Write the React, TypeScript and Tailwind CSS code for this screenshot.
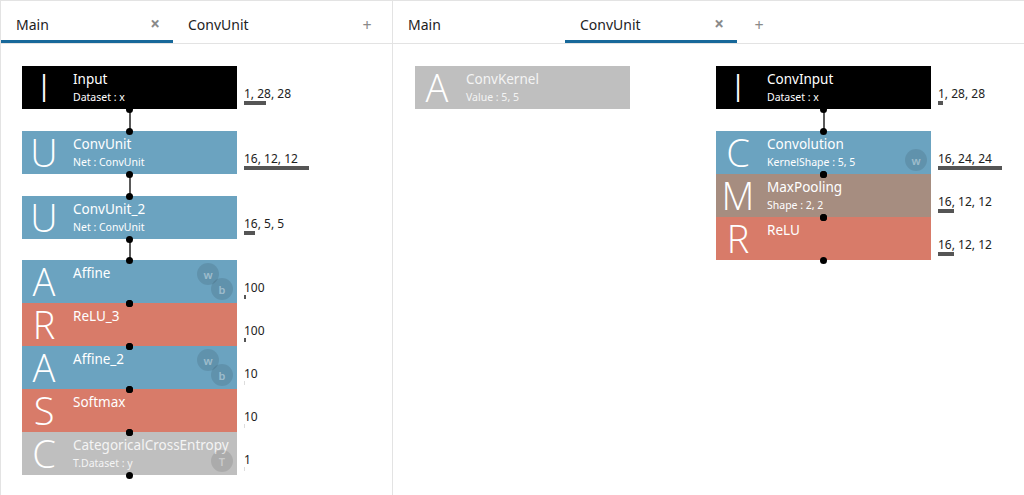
import React from "react";

type Badge = "w" | "b" | "T";
type NodeDef = {
  kind: "node";
  letter: string;
  name: string;
  sub?: string;
  color: string;
  badges?: Badge[];
  shape?: string;
  bar?: number;
  barLight?: boolean;
  topDot?: boolean;
  bottomDot?: boolean;
};
type Conn = { kind: "conn"; h: number };
type Item = NodeDef | Conn;

const BLUE = "bg-[#6ba3c0]";
const RED = "bg-[#d87b69]";
const GRAY = "bg-[#bfbfbf]";
const BLACK = "bg-black";
const BROWN = "bg-[#a68d80]";

function BadgeCircle({ b, pos }: { b: Badge; pos: "top" | "bottom" }) {
  const posCls =
    pos === "top" ? "left-[175px] top-[3px]" : "left-[189px] top-[18px]";
  return (
    <div
      className={`absolute ${posCls} w-[22px] h-[22px] rounded-full bg-black/10 flex items-center justify-center text-[11px] leading-[11px] text-white/40 font-semibold`}
    >
      {b}
    </div>
  );
}

function NodeBox({ n }: { n: NodeDef }) {
  const badges = n.badges ?? [];
  const txt = n.color === GRAY ? "text-[#f4f4f4]" : "text-white";
  return (
    <div className="flex items-start">
      <div className={`relative w-[215px] h-[43px] ${n.color} flex`}>
        <div
          className="w-[44px] h-[43px] flex justify-center text-[38px] leading-[42px] text-white"
          style={{ fontFamily: '"Open Sans", "Noto Sans", sans-serif', fontWeight: 300 }}
        >
          {n.letter}
        </div>
        <div className="pl-[7px] pt-[4px] flex flex-col">
          <div className={`text-[13.5px] leading-[19px] ${txt}`}>{n.name}</div>
          {n.sub && (
            <div className={`text-[10.5px] leading-[14px] mt-[1px] ${txt}`}>{n.sub}</div>
          )}
        </div>
        {badges.length === 2 && (
          <>
            <BadgeCircle b={badges[0]} pos="top" />
            <BadgeCircle b={badges[1]} pos="bottom" />
          </>
        )}
        {badges.length === 1 && <BadgeCircle b={badges[0]} pos="bottom" />}
        {n.topDot && (
          <div className="absolute z-10 left-[104px] -top-[3.5px] w-[7px] h-[7px] rounded-full bg-black" />
        )}
        {n.bottomDot && (
          <div className="absolute z-10 left-[104px] -bottom-[3.5px] w-[7px] h-[7px] rounded-full bg-black" />
        )}
      </div>
      {n.shape && (
        <div className="ml-[7px] pt-[21px] flex flex-col">
          <div className="text-[12px] leading-[14px] text-[#222]">{n.shape}</div>
          <div
            className={`mt-[0px] h-[4px] ${n.barLight ? "bg-[#dddddd]" : "bg-[#555555]"}`}
            style={{ width: `${n.bar ?? 1}px` }}
          />
        </div>
      )}
    </div>
  );
}

function Connector({ h }: { h: number }) {
  return (
    <div className="w-[215px] flex justify-center" style={{ height: `${h}px` }}>
      <div className="w-[2px] h-full bg-[#5a5a5a]" />
    </div>
  );
}

function Chain({ items }: { items: Item[] }) {
  return (
    <div className="flex flex-col">
      {items.map((it, i) =>
        it.kind === "conn" ? <Connector key={i} h={it.h} /> : <NodeBox key={i} n={it} />
      )}
    </div>
  );
}

function TabBar({ tabs, active }: { tabs: string[]; active: number }) {
  return (
    <div className="h-[43px] border-b border-[#e3e3e3] flex items-stretch">
      {tabs.map((t, i) => (
        <div
          key={i}
          className={`relative w-[172px] flex items-center pl-[15px] pr-[13px] text-[14px] text-[#222] border-b-[3px] ${
            i === active ? "border-[#17689a]" : "border-transparent"
          }`}
        >
          <span className="flex-1 pt-[7px]">{t}</span>
          {i === active && (
            <span className="text-[17px] leading-[17px] font-bold text-[#8a8a8a] pt-[5px]">×</span>
          )}
        </div>
      ))}
      <div className="w-[44px] flex items-center justify-center text-[16px] text-[#8a8a8a] pt-[6px]">
        +
      </div>
    </div>
  );
}

const leftChain: Item[] = [
  { kind: "node", letter: "I", name: "Input", sub: "Dataset : x", color: BLACK, shape: "1, 28, 28", bar: 22, bottomDot: true },
  { kind: "conn", h: 22 },
  { kind: "node", letter: "U", name: "ConvUnit", sub: "Net : ConvUnit", color: BLUE, shape: "16, 12, 12", bar: 65, topDot: true, bottomDot: true },
  { kind: "conn", h: 22 },
  { kind: "node", letter: "U", name: "ConvUnit_2", sub: "Net : ConvUnit", color: BLUE, shape: "16, 5, 5", bar: 11, topDot: true, bottomDot: true },
  { kind: "conn", h: 21 },
  { kind: "node", letter: "A", name: "Affine", color: BLUE, badges: ["w", "b"], shape: "100", bar: 2, topDot: true, bottomDot: true },
  { kind: "node", letter: "R", name: "ReLU_3", color: RED, shape: "100", bar: 2, topDot: true, bottomDot: true },
  { kind: "node", letter: "A", name: "Affine_2", color: BLUE, badges: ["w", "b"], shape: "10", bar: 1, barLight: true, topDot: true, bottomDot: true },
  { kind: "node", letter: "S", name: "Softmax", color: RED, shape: "10", bar: 1, barLight: true, topDot: true, bottomDot: true },
  { kind: "node", letter: "C", name: "CategoricalCrossEntropy", sub: "T.Dataset : y", color: GRAY, badges: ["T"], shape: "1", bar: 1, barLight: true, topDot: true, bottomDot: true },
];

const kernelChain: Item[] = [
  { kind: "node", letter: "A", name: "ConvKernel", sub: "Value : 5, 5", color: GRAY },
];

const convChain: Item[] = [
  { kind: "node", letter: "I", name: "ConvInput", sub: "Dataset : x", color: BLACK, shape: "1, 28, 28", bar: 5, bottomDot: true },
  { kind: "conn", h: 22 },
  { kind: "node", letter: "C", name: "Convolution", sub: "KernelShape : 5, 5", color: BLUE, badges: ["w"], shape: "16, 24, 24", bar: 64, topDot: true, bottomDot: true },
  { kind: "node", letter: "M", name: "MaxPooling", sub: "Shape : 2, 2", color: BROWN, shape: "16, 12, 12", bar: 16, topDot: true, bottomDot: true },
  { kind: "node", letter: "R", name: "ReLU", color: RED, shape: "16, 12, 12", bar: 16, topDot: true, bottomDot: true },
];

export default function App() {
  return (
    <div
      className="w-[1024px] h-[495px] bg-white flex border-t border-[#e3e3e3] overflow-hidden"
      style={{ fontFamily: '"Noto Sans", "Open Sans", sans-serif' }}
    >
      <div className="w-[393px] h-full border-l border-r border-[#e3e3e3] flex flex-col">
        <TabBar tabs={["Main", "ConvUnit"]} active={0} />
        <div className="pl-[21px] pt-[22px]">
          <Chain items={leftChain} />
        </div>
      </div>
      <div className="flex-1 h-full flex flex-col">
        <TabBar tabs={["Main", "ConvUnit"]} active={1} />
        <div className="pl-[22px] pt-[22px] flex items-start">
          <Chain items={kernelChain} />
          <div className="ml-[86px]">
            <Chain items={convChain} />
          </div>
        </div>
      </div>
    </div>
  );
}
